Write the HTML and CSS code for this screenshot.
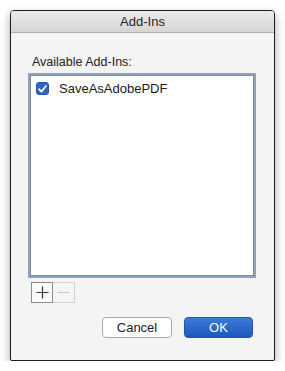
FILE: index.html
```html
<!DOCTYPE html>
<html lang="en">
<head>
  <meta charset="UTF-8" />
  <title>Add-Ins</title>
  <link rel="stylesheet" href="styles.css">
</head>
<body>
  <div class="window">
    <div class="titlebar">Add-Ins</div>
    <div class="content">
      <p class="label">Available Add-Ins:</p>
      <div class="list">
        <div class="item">
          <span class="check">
            <svg width="9" height="8" viewBox="0 0 9 8"><path d="M1 4.2 L3.4 6.6 L8 1" fill="none" stroke="#fff" stroke-width="1.7" stroke-linecap="round" stroke-linejoin="round"/></svg>
          </span>
          <span>SaveAsAdobePDF</span>
        </div>
      </div>
      <div class="tools">
        <button class="tool">
          <svg width="13" height="13" viewBox="0 0 13 13"><path d="M6.5 0.5 V12.5 M0.5 6.5 H12.5" stroke="#333" stroke-width="1.2"/></svg>
        </button>
        <button class="tool disabled">
          <svg width="13" height="13" viewBox="0 0 13 13"><path d="M0.5 6.5 H12.5" stroke="#c8c8c8" stroke-width="1.2"/></svg>
        </button>
      </div>
      <div class="actions">
        <button class="btn">Cancel</button>
        <button class="btn primary">OK</button>
      </div>
    </div>
  </div>
</body>
</html>
```

FILE: styles.css
```css
body {
  margin: 0;
  background: #fff;
  font-family: "Liberation Sans", Arial, sans-serif;
  color: #222;
}

.window {
  margin: 10px 0 0 10px;
  width: 263px;
  height: 349px;
  border: 1px solid #1e1e1e;
  border-radius: 4px 4px 2px 2px;
  background: #f4f4f4;
  box-shadow: 0 4px 10px rgba(0, 0, 0, 0.35);
  display: flex;
  flex-direction: column;
  overflow: hidden;
}

.titlebar {
  height: 21px;
  line-height: 21px;
  text-align: center;
  font-size: 13px;
  color: #262626;
  background: linear-gradient(#ebebeb, #d5d5d5);
  border-bottom: 1px solid #b1b1b1;
}

.content {
  flex: 1;
  display: flex;
  flex-direction: column;
  padding: 0 18px 0 17px;
}

.label {
  margin: 22px 0 5px 4px;
  font-size: 12.5px;
  line-height: 15px;
}

.list {
  height: 199px;
  background: #fff;
  border: 1px solid #8a8a8a;
  box-shadow: 0 0 0 2px #8ba3c6;
  margin: 0 2px;
}

.item {
  display: flex;
  align-items: center;
  gap: 10px;
  padding: 5px 0 0 5px;
  font-size: 13px;
  color: #1a1a1a;
}

.check {
  width: 13px;
  height: 13px;
  border-radius: 3px;
  background: #2966cc;
  border: 1px solid #1f55b3;
  box-sizing: border-box;
  display: flex;
  align-items: center;
  justify-content: center;
}

.tools {
  display: flex;
  margin: 6px 0 0 3px;
}

.tool {
  width: 22px;
  height: 21px;
  padding: 0;
  display: flex;
  align-items: center;
  justify-content: center;
  background: #fbfbfb;
  border: 1px solid #8c8c8c;
}

.tool.disabled {
  border-color: #d2d2d2;
  border-left: none;
  background: #f4f4f4;
}

.actions {
  display: flex;
  justify-content: flex-end;
  gap: 12px;
  margin: 14px 3px 0 0;
}

.btn {
  width: 70px;
  height: 21px;
  padding: 0;
  font-family: "Liberation Sans", Arial, sans-serif;
  font-size: 13px;
  color: #222;
  background: #fff;
  border: 1px solid #a8a8a8;
  border-radius: 4px;
}

.btn.primary {
  width: 69px;
  color: #fff;
  background: linear-gradient(#3d7ad8, #1b58bd);
  border-color: #2054b0;
}
```
